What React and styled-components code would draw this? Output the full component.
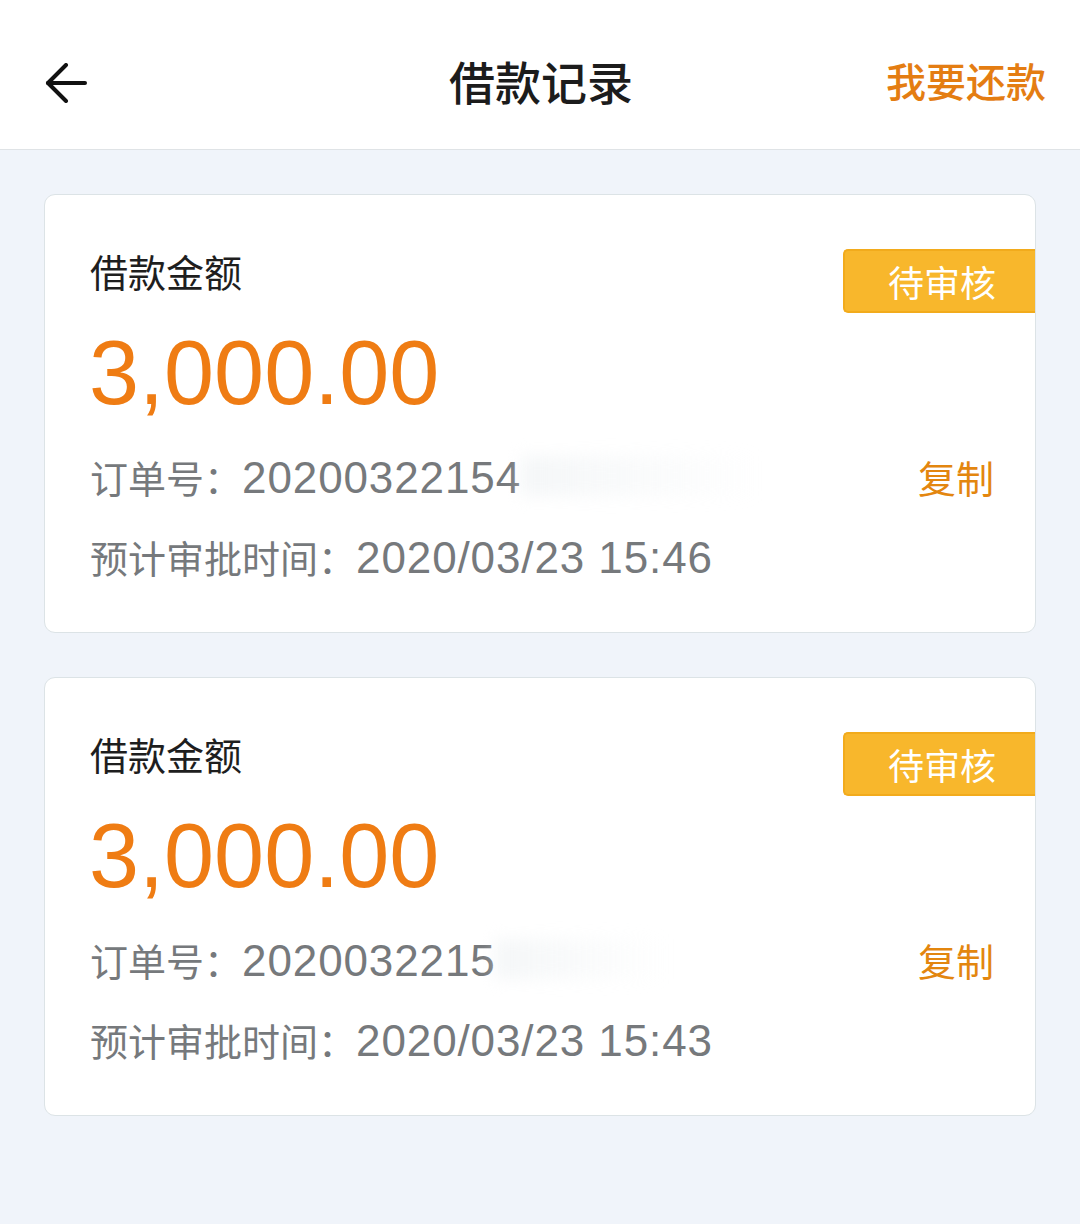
import React from 'react'
import styled, { createGlobalStyle } from 'styled-components'

const GlobalStyle = createGlobalStyle`
  html, body {
    margin: 0;
    padding: 0;
    background: #f0f4fa;
  }
  body {
    font-family: "Noto Sans CJK SC", "Noto Sans", sans-serif;
  }
`

const Page = styled.div`
  min-height: 1224px;
  background: #f0f4fa;
`

const TopBar = styled.header`
  height: 150px;
  box-sizing: border-box;
  background: #fff;
  border-bottom: 1px solid #dfe3e6;
  display: grid;
  grid-template-columns: 1fr auto 1fr;
  align-items: center;
  padding: 10px 34px 0 44px;
`

const BackButton = styled.button`
  justify-self: start;
  width: 48px;
  height: 48px;
  padding: 0;
  border: 0;
  background: none;
  display: flex;
  align-items: center;
  margin-top: 6px;
`

const Title = styled.h1`
  margin: 0 0 0 -8px;
  font-size: 46px;
  font-weight: 500;
  color: #1c1c1c;
`

const RepayLink = styled.a`
  justify-self: end;
  font-size: 40px;
  font-weight: 500;
  color: #e47d12;
`

const List = styled.main`
  display: flex;
  flex-direction: column;
  gap: 44px;
  padding: 44px 44px 0 44px;
`

const Card = styled.section`
  background: #fff;
  border: 1px solid #dce3e6;
  border-radius: 11px;
  height: 439px;
  box-sizing: border-box;
  padding: 54px 41px 0 45px;
  display: flex;
  flex-direction: column;
`

const HeadRow = styled.div`
  height: 64px;
  display: flex;
  align-items: center;
  justify-content: space-between;
`

const Label = styled.span`
  font-size: 38px;
  color: #1e1e1e;
  margin-top: -22px;
`

const Badge = styled.span`
  width: 192px;
  height: 64px;
  box-sizing: border-box;
  margin-right: -41px;
  background: #f8b72c;
  border: 2px solid #f2ab1c;
  border-right: 0;
  border-radius: 5px 0 0 5px;
  color: #fff;
  font-size: 36px;
  display: flex;
  align-items: center;
  padding-left: 43px;
`

const Amount = styled.div`
  height: 120px;
  display: flex;
  align-items: center;
  font-family: "Liberation Sans", Arial, sans-serif;
  font-size: 90px;
  color: #ef7c13;
  margin-left: -1px;
`

const InfoRow = styled.div`
  height: ${p => p.$h}px;
  display: flex;
  align-items: center;
  justify-content: space-between;
  color: #76797c;
`

const InfoText = styled.span`
  display: flex;
  align-items: baseline;
`

const InfoLabel = styled.span`
  font-size: 38px;
`

const InfoValue = styled.span`
  font-family: "Liberation Sans", Arial, sans-serif;
  font-size: 44px;
  letter-spacing: 0.9px;
`

const Masked = styled.span`
  display: inline-block;
  width: ${p => p.$w}px;
  height: 40px;
  background: linear-gradient(90deg, rgba(236, 240, 242, 0.55), rgba(255, 255, 255, 0));
  filter: blur(8px);
  align-self: center;
`

const CopyButton = styled.button`
  border: 0;
  background: none;
  padding: 0;
  font-family: inherit;
  font-size: 38px;
  color: #e3860f;
`

function BackArrow () {
  return (
    <svg width='44' height='40' viewBox='0 0 44 40' fill='none' stroke='#111' strokeWidth='4' strokeLinecap='round' strokeLinejoin='round'>
      <path d='M22 2 L4 20 L22 38' />
      <path d='M4 20 H41' />
    </svg>
  )
}

const records = [
  { amount: '3,000.00', order: '20200322154', mask: 240, time: '2020/03/23 15:46' },
  { amount: '3,000.00', order: '2020032215', mask: 170, time: '2020/03/23 15:43' }
]

export default function App () {
  return (
    <Page>
      <GlobalStyle />
      <TopBar>
        <BackButton aria-label='返回'><BackArrow /></BackButton>
        <Title>借款记录</Title>
        <RepayLink>我要还款</RepayLink>
      </TopBar>
      <List>
        {records.map(r => (
          <Card key={r.time}>
            <HeadRow>
              <Label>借款金额</Label>
              <Badge>待审核</Badge>
            </HeadRow>
            <Amount>{r.amount}</Amount>
            <InfoRow $h={86}>
              <InfoText>
                <InfoLabel>订单号：</InfoLabel>
                <InfoValue>{r.order}</InfoValue>
                <Masked $w={r.mask} />
              </InfoText>
              <CopyButton>复制</CopyButton>
            </InfoRow>
            <InfoRow $h={74}>
              <InfoText>
                <InfoLabel>预计审批时间：</InfoLabel>
                <InfoValue>{r.time}</InfoValue>
              </InfoText>
            </InfoRow>
          </Card>
        ))}
      </List>
    </Page>
  )
}
